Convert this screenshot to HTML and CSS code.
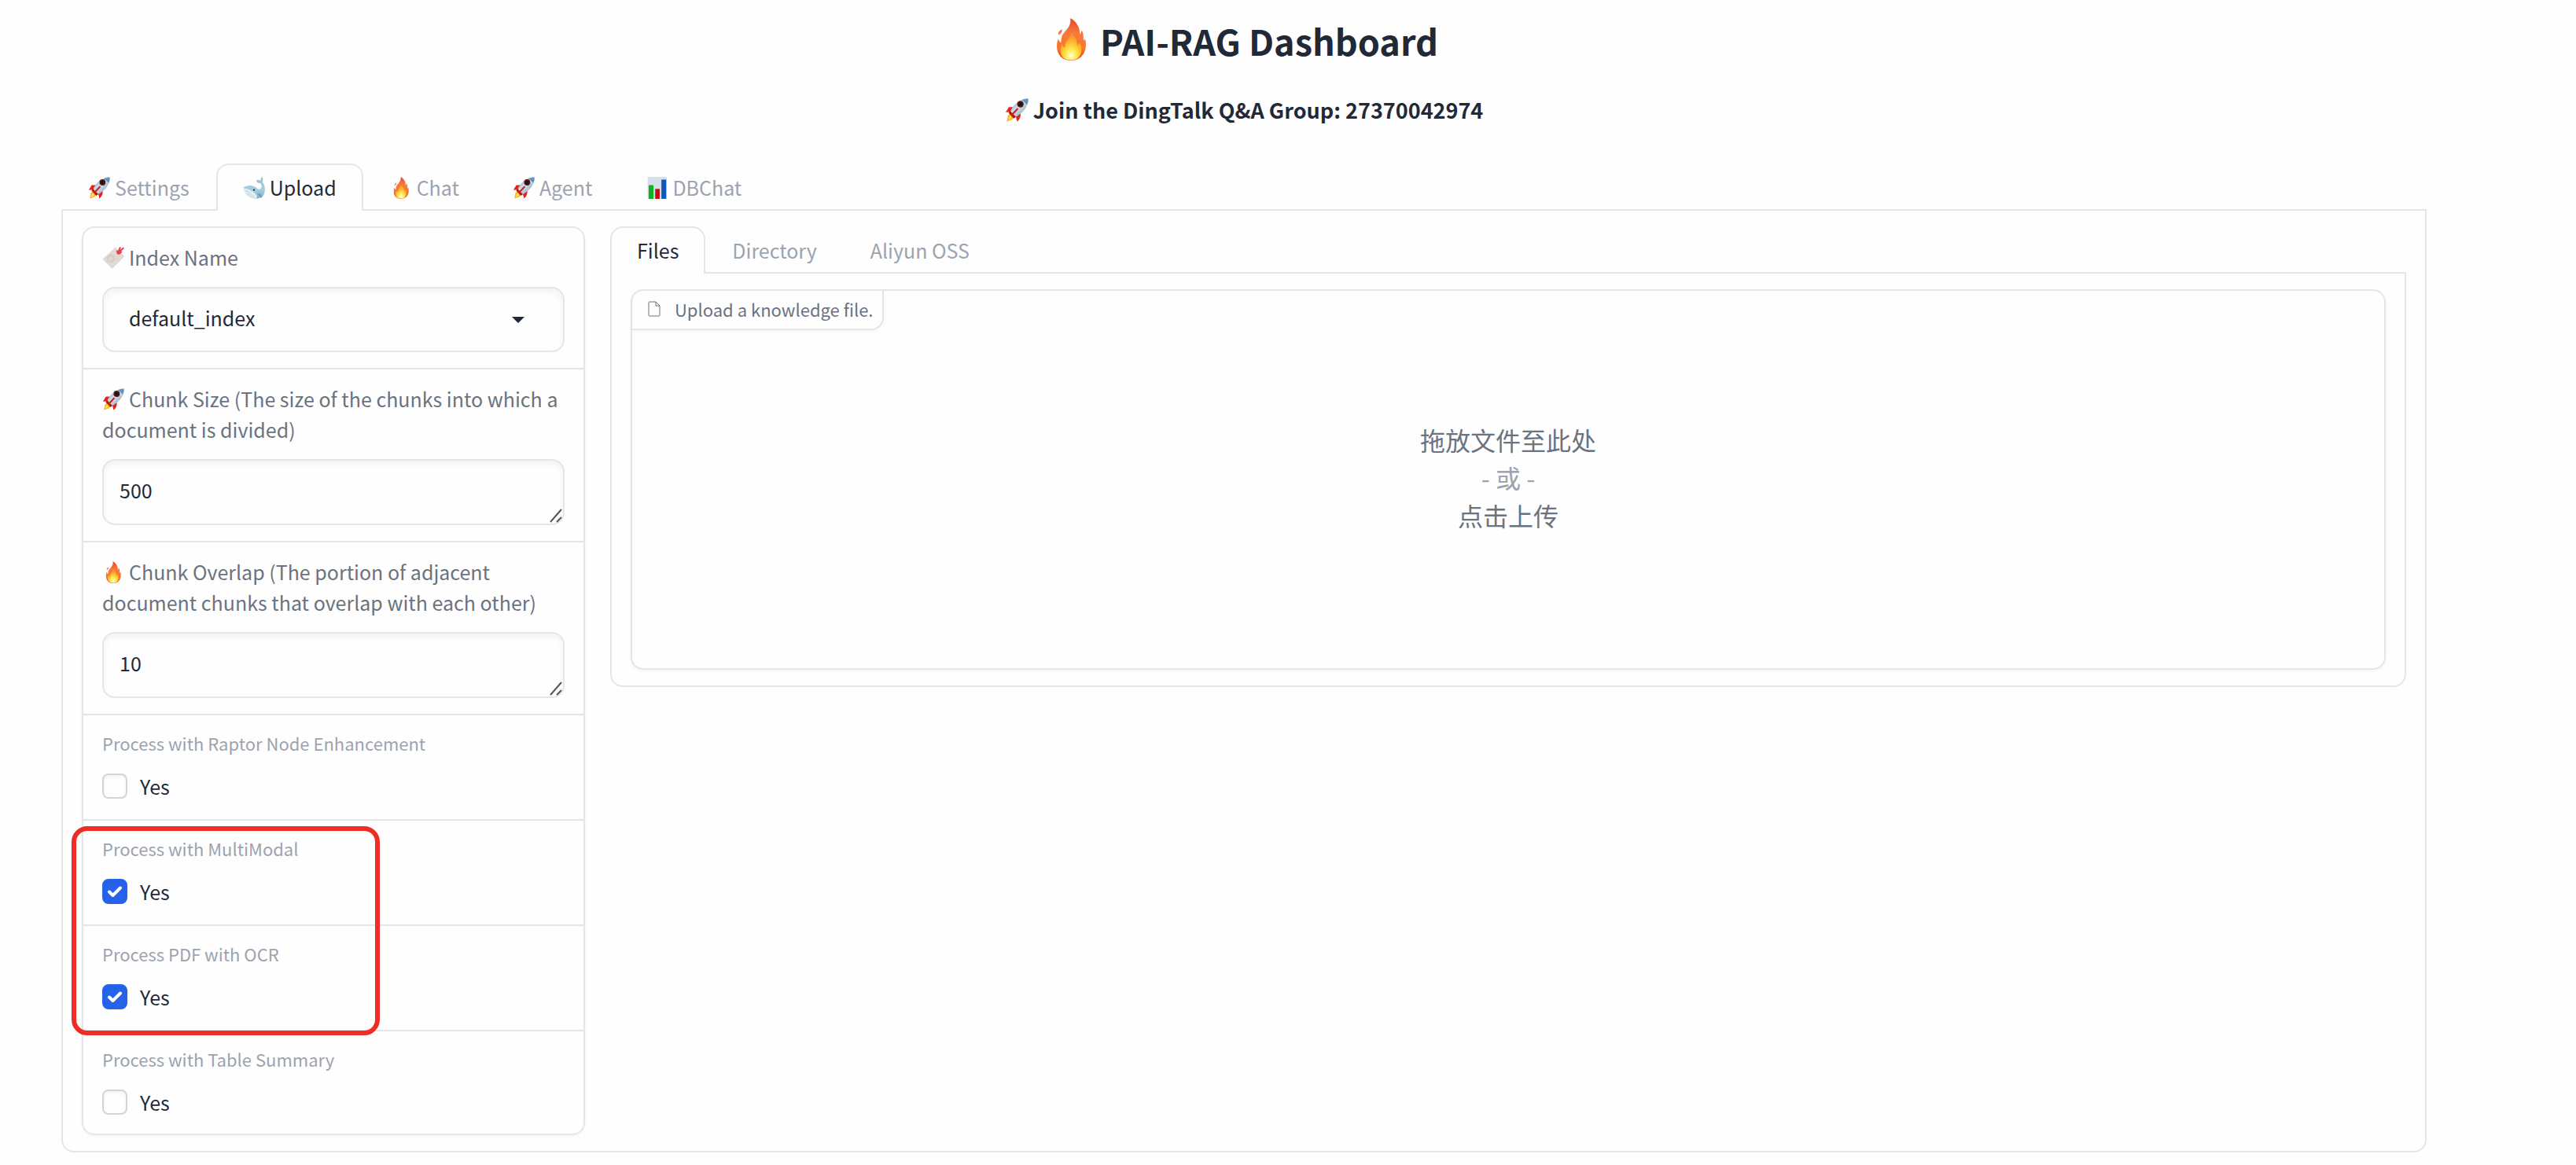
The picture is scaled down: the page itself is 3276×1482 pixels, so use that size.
FILE: index.html
```html
<!DOCTYPE html>
<html lang="en">
<head>
<meta charset="utf-8">
<title>PAI-RAG Dashboard</title>
<link rel="stylesheet" href="styles.css">
</head>
<body>
<svg class="sprite" aria-hidden="true">
  <defs>
    <linearGradient id="flameOuter" x1="0" y1="0" x2="0" y2="1">
      <stop offset="0" stop-color="#e8462a"/><stop offset="0.35" stop-color="#f8783c"/><stop offset="0.7" stop-color="#f9782a"/><stop offset="1" stop-color="#ea3f1c"/>
    </linearGradient>
    <radialGradient id="flameInner" cx="0.5" cy="0.85" r="0.75">
      <stop offset="0" stop-color="#fffde0"/><stop offset="0.3" stop-color="#ffee58"/><stop offset="0.7" stop-color="#fdb52a"/><stop offset="1" stop-color="#fa8f30"/>
    </radialGradient>
    <linearGradient id="hull" x1="0" y1="0" x2="1" y2="1">
      <stop offset="0" stop-color="#4d86bd"/><stop offset="0.45" stop-color="#d5e4f0"/><stop offset="1" stop-color="#6f8da8"/>
    </linearGradient>
    <linearGradient id="whaleSkin" x1="0" y1="0" x2="0" y2="1">
      <stop offset="0" stop-color="#8cc0d3"/><stop offset="0.6" stop-color="#a5cfde"/><stop offset="1" stop-color="#7fb0c6"/>
    </linearGradient>
  </defs>
  <symbol id="fire" viewBox="0 0 32 32">
    <path fill="url(#flameOuter)" d="M15.500 0C20 2.500 23 7 22.700 12.500C23.500 11.500 23.700 10.300 24 9.500C25.500 11 25.300 14 25.500 17C26 16.700 26.300 16 26.500 15.500C28.500 21 27 31.500 16 32C5 31.500 4 21 6.500 15.500C7 17 7.500 18 8.500 18.500C8.500 13 10.500 11.500 13 8.500C15 6 16 3.500 15.500 0ZM9.200 8.500C9.500 10.500 8.500 11.800 6.500 12.800C6.300 11 7 9.500 9.200 8.500Z"/>
    <path fill="url(#flameInner)" d="M16 11C20 14 20.800 18 20.600 20.500C21.800 20 22.300 19 22.500 18C25.500 24 24 31.500 16 31.700C7.500 31.500 7 24.500 9.300 19.500C9.800 21 10.500 21.800 11.500 22C11 17 15.500 16 16 11Z"/>
  </symbol>
  <symbol id="rocket" viewBox="0 0 32 32">
    <path fill="#fbb21f" d="M8 20L4 23.500L2.500 31.500L9.500 29L13 25Z"/>
    <path fill="#ffe95a" d="M8 23L5.500 25.500L4.500 29.500L8.500 27.500Z"/>
    <path fill="#e2231a" d="M13 12C8 12 3.500 11.500 4.500 13.500L1 19L8.500 18.500ZM21 19.500C22 24 20.500 28.500 16.500 31.500L14.500 23.500Z"/>
    <path fill="#b5170f" d="M7 17L15 25L12 27.500L5 20Z"/>
    <path fill="url(#hull)" d="M31.500 0.500C32.500 9.500 26 18.500 15.500 25L7.500 17C12 8 21 0 31.500 0.500Z"/>
    <path fill="#3b73ad" d="M31.500 0.500C31.800 3.500 31.200 6 30 8.500L23 2.500C25.500 1 28.500 0.400 31.500 0.500Z" opacity="0.7"/>
    <circle cx="21" cy="8" r="4.500" fill="#5c1512"/><circle cx="21" cy="8" r="2.600" fill="#19171c"/>
    <path stroke="#c5281d" stroke-width="2.400" stroke-linecap="round" d="M17 14.500L9.500 22.500"/>
  </symbol>
  <symbol id="whale" viewBox="0 0 32 32">
    <path fill="url(#whaleSkin)" d="M26 9.500C22.500 9.500 19 8 19.500 5C22.500 4 24.500 4.500 25.500 6C25.500 3.500 26.500 1.500 28 0C29.200 3 29 5.500 28.200 8C31.500 11 32.500 16 31.500 22C30.500 28 26 31.500 19 31.500C9 31.500 2 25 0.500 15.500C7 11.500 15 11.500 21 17C25.500 20 29 15 26 9.500Z"/>
    <path fill="#e1edf3" d="M0.500 16C7 17.500 13 19.500 17 23.500C20 26.500 22 29.500 19 31.500C9 31.500 2 25 0.500 16Z"/>
    <path fill="none" stroke="#a8c5d3" stroke-width="0.800" d="M3 20.500C8 21 12 24 16 30M5.500 24.500C8.500 25 11 27.500 13 30"/>
    <circle cx="16" cy="19" r="1.300" fill="#20303a"/>
    <path fill="#6fa3bb" d="M21 24C25 24 28 26 27.500 30.500C25 30 22.500 28 21 24Z"/>
  </symbol>
  <symbol id="bookmark" viewBox="0 0 32 32">
    <path fill="#dfdad3" d="M0.500 18L19 0.500L31.500 13L14 31.500Z"/>
    <path fill="#cdc7bf" d="M14 31.500L31.500 13L31.500 14.200L14.200 32Z"/>
    <circle cx="12.500" cy="17" r="4.500" fill="none" stroke="#c9c2b9" stroke-width="3" stroke-dasharray="1 1"/>
    <path fill="none" stroke="#e04552" stroke-width="2.400" stroke-linecap="round" d="M23 8L26 1.500M24 8L30.500 2M21.500 6.500C24 10 26 10 27.500 7.500"/>
    <circle cx="24" cy="8" r="3" fill="#e04552"/>
  </symbol>
  <symbol id="chart" viewBox="0 0 32 32">
    <path fill="#d5e0ea" d="M3 0H31V32H3Z"/>
    <path fill="#12b021" d="M4.500 12H11.500V32H4.500Z"/><path fill="#bf0d12" d="M14 17.500H20.500V32H14Z"/><path fill="#0d58bd" d="M23 4H30V32H23Z"/>
  </symbol>
</svg>

<div class="page">
  <header class="header">
    <h1 class="title"><svg class="emoji emoji-title"><use href="#fire"/></svg>PAI-RAG Dashboard</h1>
    <p class="subtitle"><svg class="emoji emoji-subtitle"><use href="#rocket"/></svg>Join the DingTalk Q&amp;A Group: 27370042974</p>
  </header>

  <nav class="tabs" role="tablist">
    <button class="tab" role="tab"><svg class="emoji"><use href="#rocket"/></svg>Settings</button>
    <button class="tab tab-active" role="tab" aria-selected="true"><svg class="emoji"><use href="#whale"/></svg>Upload</button>
    <button class="tab" role="tab"><svg class="emoji"><use href="#fire"/></svg>Chat</button>
    <button class="tab" role="tab"><svg class="emoji"><use href="#rocket"/></svg>Agent</button>
    <button class="tab" role="tab"><svg class="emoji"><use href="#chart"/></svg>DBChat</button>
  </nav>

  <main class="panel panel-outer">
    <form class="card">
      <div class="field">
        <label class="label" for="index"><svg class="emoji"><use href="#bookmark"/></svg>Index Name</label>
        <div class="select-wrap">
          <select class="control select" id="index"><option>default_index</option></select>
          <svg class="caret" viewBox="0 0 16 8"><path d="M0 0H16L8 8Z"/></svg>
        </div>
      </div>
      <div class="field">
        <label class="label" for="size"><svg class="emoji"><use href="#rocket"/></svg>Chunk Size (The size of the chunks into which a document is divided)</label>
        <div class="area-wrap">
          <textarea class="control area" id="size" rows="1">500</textarea>
          <svg class="grip" viewBox="0 0 16 18"><path d="M1 17L15 1M9 17L15 11"/></svg>
        </div>
      </div>
      <div class="field">
        <label class="label" for="overlap"><svg class="emoji"><use href="#fire"/></svg>Chunk Overlap (The portion of adjacent document chunks that overlap with each other)</label>
        <div class="area-wrap">
          <textarea class="control area" id="overlap" rows="1">10</textarea>
          <svg class="grip" viewBox="0 0 16 18"><path d="M1 17L15 1M9 17L15 11"/></svg>
        </div>
      </div>
      <div class="field field-check">
        <span class="info">Process with Raptor Node Enhancement</span>
        <label class="check"><input type="checkbox" class="box">Yes</label>
      </div>
      <div class="marked">
        <div class="field field-check">
          <span class="info">Process with MultiModal</span>
          <label class="check"><input type="checkbox" class="box" checked>Yes</label>
        </div>
        <div class="field field-check">
          <span class="info">Process PDF with OCR</span>
          <label class="check"><input type="checkbox" class="box" checked>Yes</label>
        </div>
      </div>
      <div class="field field-check">
        <span class="info">Process with Table Summary</span>
        <label class="check"><input type="checkbox" class="box">Yes</label>
      </div>
    </form>

    <section class="content">
      <nav class="tabs" role="tablist">
        <button class="tab tab-active" role="tab" aria-selected="true">Files</button>
        <button class="tab" role="tab">Directory</button>
        <button class="tab" role="tab">Aliyun OSS</button>
      </nav>
      <div class="panel">
        <div class="drop">
          <span class="drop-label">
            <svg class="file-icon" viewBox="0 0 16 20"><path d="M2 1H10L15 6V18Q15 19 14 19H2Q1 19 1 18V2Q1 1 2 1ZM10 1V6H15"/></svg>
            Upload a knowledge file.
          </span>
          <button type="button" class="drop-zone" lang="zh-CN">
            <span>拖放文件至此处</span>
            <span class="or">- 或 -</span>
            <span>点击上传</span>
          </button>
        </div>
      </div>
    </section>
  </main>
</div>
</body>
</html>
```

FILE: styles.css
```css
:root {
  --line: #e4e5e8;
  --bg: #fefefe;
  --ink: #1f2937;
  --muted: #6b7280;
  --faint: #9ca3af;
}

* { box-sizing: border-box; }

body {
  margin: 0;
  background: var(--bg);
  color: var(--ink);
  font-family: "Noto Sans CJK SC", "Noto Sans", sans-serif;
  font-size: 25px;
  line-height: 39px;
}

button, select, textarea { font: inherit; color: inherit; }

.sprite { position: absolute; width: 0; height: 0; }

.page { padding: 16px 190px 12px 78px; }

.header { text-align: center; }

.title {
  margin: 0;
  font-size: 45px;
  line-height: 72px;
  font-weight: 700;
}

.subtitle {
  margin: 32px 0 48px;
  font-size: 27px;
  line-height: 40px;
  font-weight: 700;
}

.emoji {
  width: 28px;
  height: 28px;
  margin-right: 6px;
  vertical-align: -4px;
}

.emoji-title {
  width: 54px;
  height: 54px;
  margin-right: 10px;
  vertical-align: -6px;
}

.emoji-subtitle {
  width: 30px;
  height: 30px;
}

.tabs {
  display: flex;
  border-bottom: 2px solid var(--line);
}

.tab {
  margin-bottom: -2px;
  padding: 8px 32px 10px;
  border: 2px solid transparent;
  border-bottom: 0;
  border-radius: 16px 16px 0 0;
  background: none;
  color: var(--faint);
  line-height: 40px;
}

.tab-active {
  border-color: var(--line);
  background: var(--bg);
  color: var(--ink);
}

.panel {
  padding: 20px 24px;
  border: 2px solid var(--line);
  border-top: 0;
  border-radius: 0 0 16px 16px;
}

.panel-outer {
  display: flex;
  align-items: flex-start;
  gap: 32px;
}

.card {
  flex: 0 0 640px;
  border: 2px solid var(--line);
  border-radius: 16px;
  box-shadow: 0 2px 4px rgba(0, 0, 0, 0.04);
}

.field {
  display: flex;
  flex-direction: column;
  gap: 18px;
  padding: 18px 24px 20px;
  border-bottom: 2px solid var(--line);
}

.field-check { padding-bottom: 22px; }

.field:last-child {
  padding-bottom: 20px;
  border-bottom: 0;
}

.marked .field:last-child {
  padding-bottom: 22px;
  border-bottom: 2px solid var(--line);
}

.label { color: var(--muted); }

.control {
  display: block;
  width: 100%;
  height: 84px;
  margin: 0;
  border: 2px solid var(--line);
  border-radius: 16px;
  background: var(--bg);
  box-shadow: inset 0 4px 8px rgba(0, 0, 0, 0.05);
}

.select-wrap, .area-wrap { position: relative; }

.select {
  height: 83px;
  padding: 0 32px 4px;
  appearance: none;
}

.caret {
  position: absolute;
  right: 51px;
  top: 38px;
  width: 16px;
  height: 8px;
  fill: var(--ink);
}

.area {
  padding: 18px 20px;
  resize: none;
  overflow: hidden;
}

.grip {
  position: absolute;
  right: 3px;
  bottom: 3px;
  width: 16px;
  height: 18px;
  fill: none;
  stroke: #55565a;
  stroke-width: 2;
}

.info {
  color: var(--faint);
  font-size: 22px;
  line-height: 34px;
}

.check {
  display: flex;
  align-items: center;
  gap: 16px;
  line-height: 40px;
}

.box {
  width: 32px;
  height: 32px;
  margin: 0;
  appearance: none;
  border: 2px solid #d1d5db;
  border-radius: 8px;
  background: var(--bg);
  box-shadow: inset 0 2px 4px rgba(0, 0, 0, 0.05);
}

.box:checked {
  border-color: #2563eb;
  background: #2563eb url("data:image/svg+xml,%3Csvg xmlns='http://www.w3.org/2000/svg' viewBox='0 0 28 28'%3E%3Cpath d='M7 14.500L11.500 19L21 9.500' fill='none' stroke='white' stroke-width='4' stroke-linecap='round' stroke-linejoin='round'/%3E%3C/svg%3E") center / 28px 28px no-repeat;
}

.marked { position: relative; }

.marked::after {
  content: "";
  position: absolute;
  inset: 7px 259px -5px -15px;
  border: 6px solid #ee2d27;
  border-radius: 20px;
  pointer-events: none;
}

.content { flex: 1; min-width: 0; }

.drop {
  display: flex;
  flex-direction: column;
  align-items: flex-start;
  height: 484px;
  border: 2px solid var(--line);
  border-radius: 16px;
  box-shadow: 0 2px 4px rgba(0, 0, 0, 0.04);
}

.drop-label {
  display: flex;
  align-items: center;
  gap: 18px;
  margin-bottom: -50px;
  padding: 6px 12px 8px 20px;
  border: solid var(--line);
  border-width: 0 2px 2px 0;
  border-radius: 16px 0 16px 0;
  box-shadow: 0 2px 4px rgba(0, 0, 0, 0.04);
  color: var(--muted);
  font-size: 22px;
  line-height: 34px;
}

.file-icon {
  width: 16px;
  height: 20px;
  fill: none;
  stroke: var(--muted);
}

.drop-zone {
  display: flex;
  flex: 1;
  flex-direction: column;
  align-self: stretch;
  align-items: center;
  justify-content: center;
  padding: 0 0 6px;
  border: 0;
  background: none;
  color: var(--muted);
  font-size: 32px;
  line-height: 48px;
}

.or { color: var(--faint); }
```
